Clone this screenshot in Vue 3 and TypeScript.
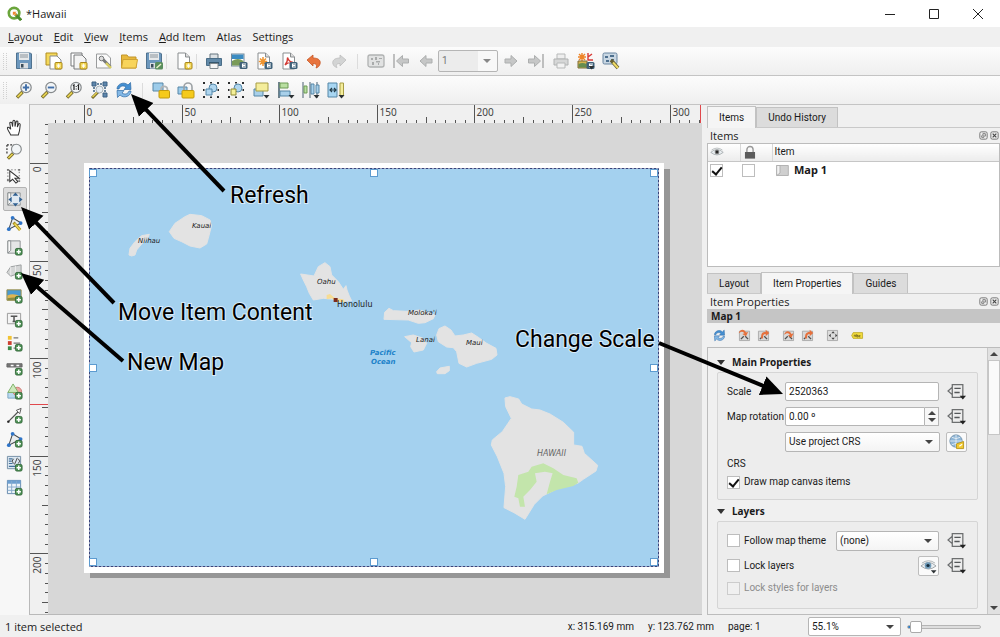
<script setup lang="ts">
import { ref } from 'vue'

interface ToolButton {
  icon: string
  label: string
  disabled?: boolean
}

const plus = '<rect x="10" y="10" width="7" height="7" rx="1.5" fill="#4d9255" stroke="#35683b"/><path d="M13.5 11.2v4.6M11.2 13.5h4.6" stroke="#fff" stroke-width="1.5"/>'
const down = '<path d="M11.500 14h6l-3 3.500z" fill="#2c3134"/>'
const star = '<rect x="10" y="10.500" width="7" height="6.500" rx="1" fill="#f3d64a" stroke="#a8861c"/><path d="M13.500 11.500v4.500M11.500 13.800h4M12 12.300l3 3M15 12.300l-3 3" stroke="#fff" stroke-width=".8"/>'
const exporter = '<rect x="9.500" y="10" width="8" height="7" rx="1.500" fill="#3e6079"/><path d="M16 12h-3.500v3H16M12 13.500h3.500" fill="none" stroke="#fff" stroke-width="1.100"/>'
const lens = '<path d="M7.500 11 2 16.500" stroke="#6c6125" stroke-width="3.400"/><path d="M7 11.500 2.500 16" stroke="#e3cf51" stroke-width="1.800"/><circle cx="11" cy="6.500" r="5.200" fill="#f2f5f7" stroke="#85898b" stroke-width="1.200"/>'
const floppy = '<path d="M1.500 1h14l1 1v14.500h-15z" fill="#6c97bd" stroke="#50728f"/><rect x="4" y="1" width="10" height="7" fill="#e6e9eb"/><path d="M5 3h8M5 5h8" stroke="#8c959c"/><rect x="5" y="11" width="8" height="5.500" fill="#d9dee2"/><rect x="6" y="12" width="2.500" height="3.500" fill="#3b4d5b"/>'
const page = '<path d="M3 1h7.500l4 4v12H3z" fill="#fff" stroke="#898d8f"/><path d="M10.500 1v4h4" fill="#ddd" stroke="#898d8f"/>'
const padlock = '<path d="M9 10V8.500a3.200 3.200 0 0 1 6.400 0V10" fill="none" stroke="#b0b4b6" stroke-width="1.800"/><rect x="7" y="9.500" width="10.500" height="7.500" rx="1" fill="#f5ca1b" stroke="#c09a11"/>'
const dots = (c: string) => `<path d="M1 1h2v2H1zM15 1h2v2h-2zM1 15h2v2H1zM15 15h2v2h-2zM8 1h2v1.500H8zM8 15.500h2V17H8zM1 8h1.500v2H1zM15.500 8H17v2h-1.500z" fill="${c}"/>`
const mapSheet = '<path d="M2 2h13v13H2z" fill="#e5e6e6" stroke="#8b8f92"/><path d="M2 2h3v10l-3 3z" fill="#fafafa" stroke="#8b8f92"/>'
const arrows4 = (c: string) => `<path d="M10 1.500 13 5H7zM10 16.500 7 13h6zM2.500 9 6 6v6zM17.500 9 14 12V6z" fill="${c}"/>`
const nodes = '<path d="M3 15 7 3l9 5.500z" fill="#e9ecee" stroke="#46494b" stroke-width="1.100"/><circle cx="7" cy="3" r="2" fill="#2e74c8"/><circle cx="3" cy="15" r="2" fill="#2e74c8"/><circle cx="15.500" cy="8.500" r="2" fill="#2e74c8"/>'
const sync = '<path d="M2 8C2 3 9 0 13 4l2.500-2.500L16 8.500H9L11 6C8 4 5 5 4 8z" fill="#4590d2" stroke="#2e6aa5" stroke-width=".7"/><path d="M16 10c0 5-7 8-11 4l-2.500 2.500L2 9.500h7L7 12c3 2 6 1 7-2z" fill="#83b8e6" stroke="#2e6aa5" stroke-width=".7"/>'
const orangeIn = '<path d="M1 6C2 0 9-1 11 5l3-1-3 6-5-3 3-1C7 3 4 3 1 6z" fill="#e5703c"/>'
const orangeOut = '<path d="M6 13C5 7 7 4 12 4V1l5 4.500-5 4.500V7C9 7 8 9 8.500 13z" fill="#e5703c"/>'
const frameGrey = '<path d="M2 3h14v13H2z" fill="#d8d8d8" stroke="#9a9a9a"/><path d="M4 14l4-4M14 14l-4-4" stroke="#505050" stroke-width="1.800"/>'
const left = '<path d="M3 9l6-5.500v3.500h6v4H9v3.500z" fill="#c6c7c7" stroke="#adafaf"/>'
const right = '<path d="M15 9 9 3.500V7H3v4h6v3.500z" fill="#c6c7c7" stroke="#adafaf"/>'
const eye = '<path d="M1 9.500Q9 2 17 9.500Q9 16 1 9.500z" fill="#e9eef1" stroke="#9da3a6"/><path d="M2 6.500Q9 1.500 16 6.500" fill="none" stroke="#aab0b3"/>'

const icons: Record<string, string> = {
  save: floppy,
  newLayout: '<path d="M1 1h11v12H1z" fill="#f4d85b" stroke="#b08d20"/><path d="M5 4h7l4 4v9H5z" fill="#fff" stroke="#898d8f"/>' + star,
  duplicate: '<path d="M1 1h11v13H1z" fill="#fff" stroke="#77797a"/><path d="M4 3h8l4 4v10H4z" fill="#f3f3f3" stroke="#77797a"/>' + star,
  manager: '<path d="M1.500 2h10l4 4v10h-14z" fill="#fafafa" stroke="#9a9c9d"/><path d="M7 6.500 15.500 15" stroke="#77797a" stroke-width="3"/><path d="M11 11l5 5" stroke="#d9cf63" stroke-width="2.400"/><circle cx="6.500" cy="6.500" r="2.300" fill="#ddd" stroke="#77797a"/>',
  folder: '<path d="M1.500 3h5.500l1.500 2H16v11H1.500z" fill="#e8b93c" stroke="#c1952a"/><path d="M1.500 16 3 7.500h14.500L16 16z" fill="#f8d45b" stroke="#cfa233"/>',
  saveTemplate: floppy + '<rect x="10" y="10" width="8" height="7.500" rx="1.500" fill="#5a8e5d"/><path d="M11.500 16l4.500-4" stroke="#e9f0c9" stroke-width="1.500"/>',
  addPage: page + star,
  print: '<path d="M5 2h8v5H5z" fill="#dce1e4" stroke="#64747f"/><path d="M1.500 6.500h15v7h-15z" fill="#6189a8" stroke="#4a6d87"/><path d="M4 10h10v2H4z" fill="#34566d"/><path d="M5 11.500h8v5H5z" fill="#f5f5f5" stroke="#7d878d"/>',
  exportImage: '<rect x="1.500" y="2" width="12.500" height="12" fill="#fff" stroke="#74899a"/><path d="M2 2.500h11.500V7H2z" fill="#3b8bc1"/><path d="M2 9q6-4 11.500 0v4.500H2z" fill="#7a9b59"/>' + exporter,
  exportSvg: page + '<path d="M8 5v9M3.800 9.500h8.400M5 6.500l6 6M11 6.500l-6 6" stroke="#ef9430" stroke-width="1.500"/>' + exporter,
  exportPdf: page + '<path d="M5 13Q8 9 7.500 5.500Q9 10 13 10.500Q8 10 5 13z" fill="none" stroke="#d33b35" stroke-width="1.300"/>' + exporter,
  undo: '<path d="M2 8 8 3v3c6 0 8 3 7 6-.5 2-2 3.500-4 4 1.500-3 0-4.500-3-4.500V14z" fill="#e8743e" stroke="#c65724" stroke-width=".8"/>',
  redo: '<path d="M16 8 10 3v3C4 6 2 9 3 12c.5 2 2 3 4 3.500-1.500-3 0-4 3-4V14z" fill="#d3d4d4" stroke="#bcbdbd" stroke-width=".8"/>',
  atlas: '<rect x="1" y="3" width="16" height="12" rx="2" fill="#e1e2e2" stroke="#b0b2b2" stroke-width="1.300"/><path d="M4 6h2v2H4zM8 5h2v3H8zM12 6h3v1h-3zM5 10h2v3H5zM9 9h4v1.500H9zM11 11h1v2h-1z" fill="#a9abab"/>',
  first: '<path d="M2 2v14" stroke="#b8b9b9" stroke-width="1.800"/><g transform="translate(1.500 0)">' + left + '</g>',
  prev: left,
  next: right,
  last: '<path d="M16 2v14" stroke="#b8b9b9" stroke-width="1.800"/><g transform="translate(-1.500 0)">' + right + '</g>',
  printGrey: '<path d="M5 2h8v5H5z" fill="#eee" stroke="#b7b9b9"/><path d="M2 7h14v6H2z" fill="#d6d7d7" stroke="#b0b2b2"/><path d="M5 11h8v5H5z" fill="#f2f2f2" stroke="#b7b9b9"/>',
  exportAtlas: '<path d="M5 1v8M1 5h8M2 2l6 6M8 2 2 8" stroke="#ee8528" stroke-width="1.400"/><path d="M11 1v7h5M11 5l4-3" fill="none" stroke="#d83a35" stroke-width="1.400"/><path d="M1 9h9v7H1z" fill="#d8b44f" stroke="#806c39"/><path d="M1.500 12q4-2 8 0v3.500h-8z" fill="#668d50"/>' + exporter + down,
  atlasSettings: '<rect x="1" y="1" width="14" height="11" rx="1.500" fill="#c9d7e3" stroke="#6985a0"/><path d="M3 4h3v2H3zM8 3h4v2H8zM4 8h3v2H4zM9 7h3v1H9z" fill="#4d6f8e"/><path d="M9 8l7 8" stroke="#665f31" stroke-width="3.500"/><path d="M11 10.500l5 5.500" stroke="#f1dc67" stroke-width="2"/>',
  zoomIn: lens + '<path d="M11 3.300v6.400M7.800 6.500h6.400" stroke="#416fa8" stroke-width="1.900"/>',
  zoomOut: lens + '<path d="M7.800 6.500h6.400" stroke="#416fa8" stroke-width="1.900"/>',
  zoomOne: lens + '<path d="M8 4.800 9 4v5M12.500 4.800l1-.8v5" fill="none" stroke="#222" stroke-width="1.200"/><path d="M10.700 5h1v1h-1zM10.700 7.500h1v1h-1z" fill="#222"/>',
  zoomFull: '<path d="M2 1h4v4H2zM13 1h4v4h-4zM13 12h4v4h-4z" fill="#5d86ad" stroke="#3d6182"/><path d="M7 3h5M15 6v5M4 6v5" stroke="#3d6182" stroke-width="1.500" stroke-dasharray="2 1"/><path d="M8 11 2 17" stroke="#756a2b" stroke-width="3"/><path d="M7 11.500 2.500 16" stroke="#e3cf51" stroke-width="1.500"/><circle cx="9.500" cy="8.500" r="3.500" fill="#e7edf2" stroke="#a7b1b8"/>',
  refresh: sync,
  lock: '<path d="M1 2h10v8H1z" fill="#9dccea" stroke="#5686a7"/>' + padlock,
  unlock: '<path d="M1 6h9v7H1z" fill="#9dccea" stroke="#5686a7"/><path d="M7 9V6a4 4 0 0 1 8 0v4" fill="none" stroke="#9da2a5" stroke-width="1.600"/><rect x="5" y="9.500" width="12" height="7.500" rx="1" fill="#f5ca1b" stroke="#c09a11"/>',
  group: dots('#2b2d2e') + '<circle cx="11" cy="7" r="4" fill="#b0d6ef" stroke="#5488aa"/><path d="M4 8h6v6H4z" fill="#b0d6ef" stroke="#5488aa"/>',
  ungroup: dots('#2b2d2e') + '<circle cx="11" cy="7" r="4" fill="#b0d6ef" stroke="#5488aa"/><path d="M4 8h5v6H4z" fill="#f3ef98" stroke="#8f8a34"/>',
  raise: '<path d="M2 8h9v7H2z" fill="#a8d0ea" stroke="#5486a6"/><path d="M4 2h12v8H4z" fill="#f4ed9b" stroke="#a79d44"/>' + down,
  align: '<path d="M2 1v16" stroke="#36505f" stroke-width="1.400"/><path d="M3 2h8v5H3z" fill="#b9dfa1" stroke="#6d9b54"/><path d="M3 10h10v5H3z" fill="#a8d0ea" stroke="#5486a6"/>' + down,
  distribute: '<path d="M1 1v16M8 1v16M15 1v16" stroke="#4a6170" stroke-width="1"/><path d="M2 5h3v7H2z" fill="#b9dfa1" stroke="#6d9b54"/><path d="M9 3h3v10H9zM14 4h3v8h-3z" fill="#a8d0ea" stroke="#5486a6"/>' + down,
  resize: '<path d="M1 2h9v14H1z" fill="#a8d6f2" stroke="#5486a6"/><path d="M3 9h6M5 7 3 9l2 2M7 7l2 2-2 2" fill="none" stroke="#263e4c" stroke-width="1.200"/><path d="M13 2h3.500v13H13z" fill="#f4ed9b" stroke="#a79d44"/>' + down,
  pan: '<path d="M5 17C4 14 1 11 1.500 9.500S4 9 5 11L4 4.500C4 3 6 3 6.300 4.500L7 8 7.300 2.500C7.500 1 9.300 1 9.500 2.500V8l1.200-5c.4-1.300 2-.9 1.900.5L12 8.500l1.300-3c.6-1.200 2-.6 1.700.8C14.500 10 15 12 13 17z" fill="#fff" stroke="#333" stroke-width="1.100"/>',
  zoomTool: '<path d="M1 2h8M1 2v9" stroke="#333" stroke-dasharray="2 1.500" fill="none" stroke-width="1.300"/>' + lens,
  select: '<path d="M2 3h12v11H2z" fill="none" stroke="#777" stroke-dasharray="1.500 2"/>' + '<path d="M4 4v11.500l3-2.500 3.500 4 2-1.500L9.500 12H14z" fill="#fff" stroke="#333" stroke-width="1.100"/><path d="M1 2h2v2H1zM13 2h2v2h-2zM1 13h2v2H1zM13 14h2v2h-2z" fill="#777"/>',
  moveContent: mapSheet + '<circle cx="10" cy="9" r="6" fill="#dfe9f2"/>' + arrows4('#305f90'),
  editNodes: nodes + '<path d="M8 8l7 8" stroke="#a98f1d" stroke-width="3.200"/><path d="M9 9l6 7" stroke="#f2db58" stroke-width="1.500"/>',
  addMap: mapSheet + plus,
  add3d: '<path d="M1 10 5 4l11-2v8L5 14z" fill="#d4d6d6" stroke="#999c9d"/><path d="M5 4v9M10 3v9" stroke="#eee"/>' + plus,
  addPicture: '<path d="M1 3h15v11H1z" fill="#4a9ad1" stroke="#9a8b43"/><path d="M1.500 9q6-3 14 1v3.500h-14z" fill="#e0b650"/><path d="M1.500 12q7-2 14 0v2h-14z" fill="#8b8b42"/>' + plus,
  addLabel: '<path d="M1.500 2.500h14v11h-14z" fill="#f4f4f4" stroke="#999"/><path d="M5 5.500h7M8.500 5.500V11M7 11h3" stroke="#555" stroke-width="1.600"/>' + plus,
  addLegend: '<path d="M2 1h4v4H2z" fill="#f2c333"/><path d="M2 6.500h4v4H2z" fill="#cc4030"/><path d="M2 12h4v4H2z" fill="#3b8a48"/><path d="M8 3h5M8 8.500h7M8 14h3" stroke="#777" stroke-width="1.300"/>' + plus,
  addScale: '<path d="M1 5h16v3.500H1z" fill="#777" stroke="#666"/><path d="M5 6.800h3M11 6.800h3" stroke="#fff" stroke-width="1.500"/>' + plus,
  addShape: '<path d="M2 10h8v6H2z" fill="#b9daf0" stroke="#7ba6c4"/><circle cx="12" cy="9" r="4.500" fill="#eaa7a2" stroke="#cb7770"/><path d="M2 10 7.500 1 13 10z" fill="#cde9bd" stroke="#7caf66"/>' + plus,
  addArrow: '<path d="M2 16 14 4" stroke="#555" stroke-width="1.300"/><path d="M16 1.500 14.500 7 11 3.500z" fill="#fff" stroke="#555"/><circle cx="2.500" cy="15.500" r="1.300" fill="#222"/>' + plus,
  addNode: nodes + plus,
  addHtml: '<path d="M1.500 1.500h14v13h-14z" fill="#dce8f2" stroke="#748ea5"/><path d="M3 4h4M3 6.500h3M3 9h4M3 12h7" stroke="#45729a" stroke-width="1.300"/><path d="M8 4 6.500 6.500 8 9M13 4l1.500 2.500L13 9M12 3l-3 7" stroke="#444" fill="none"/>' + plus,
  addTable: '<path d="M1.500 1.500h14v14h-14z" fill="#eef4fa" stroke="#6387ab"/><path d="M1.500 1.500h14V5h-14z" fill="#6d9fd0"/><path d="M1.500 8.500h14M1.500 12h14M6 2v13M11 2v13" stroke="#86a9cb"/>' + plus,
  viewToMap: frameGrey + orangeIn,
  mapToView: frameGrey + orangeOut,
  setCanvas: frameGrey + '<g transform="translate(2 2)">' + orangeIn + '</g>',
  viewExtent: frameGrey + orangeOut,
  bookmarks: '<path d="M2 2h14v14H2z" fill="#dcdcdc" stroke="#999"/><g transform="translate(1.800 1.800) scale(.8)">' + arrows4('#444') + '</g>',
  labeling: '<path d="M3 5h13v8H3L1 9z" fill="#f1db3d" stroke="#b7a01c"/><path d="M4.500 10.500v-2h2v2.500M8 7v4h2V9H8M13 9h-1.500v2H13" fill="none" stroke="#66591b"/>',
  eyeDark: eye + '<circle cx="9" cy="9" r="3" fill="#777"/><circle cx="9" cy="9" r="1.500" fill="#222"/>',
  eyeBlue: eye + '<circle cx="8.500" cy="9" r="3.500" fill="#6f9ab8"/><circle cx="8.500" cy="9" r="1.700" fill="#152c3c"/>' + down,
  padlockGrey: '<path d="M5 9V6a4 4 0 0 1 8 0v3" fill="none" stroke="#999" stroke-width="1.800"/><path d="M2.500 9h13v8.500h-13z" fill="#5c5c5c"/>',
  mapItem: '<path d="M2 3h14v12H2z" fill="#cfcfcf" stroke="#aaa"/><path d="M2 3h4v9l-4 3z" fill="#f2f2f2" stroke="#aaa"/>',
  override: '<path d="M5 2.500h10v12H5zM5 5 1 8.500 5 12z" fill="#ededed" stroke="#6d6f70" stroke-width="1.200"/><path d="M7 6h6M7 10h5" stroke="#55585a" stroke-width="1.300"/><path d="M12 13h6l-3 3.500z" fill="#222"/>',
  globe: '<circle cx="8.500" cy="8.500" r="6.500" fill="#8eb5d6" stroke="#6d8fab"/><path d="M2 8.500h13M8.500 2v13M4 4.500q4.500 3 9 0M4 12.500q4.500-3 9 0" fill="none" stroke="#e7f0f6" stroke-width=".9"/><path d="M9 11.500 16.500 9v7.500H9z" fill="#f1c92f" stroke="#ba9820"/><path d="M12 14l3-2" stroke="#fff" stroke-width="1.200"/>',
  float: '<rect x="3" y="3" width="12" height="12" rx="2.500" fill="#eee" stroke="#777" stroke-width="1.600"/><path d="M8 6h4v4H8zM6 9v3h4" fill="none" stroke="#666" stroke-width="1.300"/>',
  close: '<rect x="3" y="3" width="12" height="12" rx="2.500" fill="#eee" stroke="#777" stroke-width="1.600"/><path d="M6 6l6 6M12 6l-6 6" stroke="#444" stroke-width="1.800"/>',
  logo: '<circle cx="8.500" cy="8.500" r="6.300" fill="#fff" stroke="#6aa53b" stroke-width="3.200"/><path d="M10 10l7 7" stroke="#4e8a2b" stroke-width="3.600"/><path d="M7 7h4.500l-1.500 1.500 2 2-1.500 1.500-2-2L7 11.500z" fill="#ee8b32"/>',
}

const menus: { key: string; rest: string }[] = [
  { key: 'L', rest: 'ayout' },
  { key: 'E', rest: 'dit' },
  { key: 'V', rest: 'iew' },
  { key: 'I', rest: 'tems' },
  { key: 'A', rest: 'dd Item' },
  { key: '', rest: 'Atlas' },
  { key: '', rest: 'Settings' },
]

const fileGroups: ToolButton[][] = [
  [{ icon: 'save', label: 'Save project' }],
  [
    { icon: 'newLayout', label: 'New layout' },
    { icon: 'duplicate', label: 'Duplicate layout' },
    { icon: 'manager', label: 'Layout manager' },
    { icon: 'folder', label: 'Add items from template' },
    { icon: 'saveTemplate', label: 'Save as template' },
  ],
  [{ icon: 'addPage', label: 'Add pages' }],
  [
    { icon: 'print', label: 'Print layout' },
    { icon: 'exportImage', label: 'Export as image' },
    { icon: 'exportSvg', label: 'Export as SVG' },
    { icon: 'exportPdf', label: 'Export as PDF' },
    { icon: 'undo', label: 'Undo' },
    { icon: 'redo', label: 'Redo', disabled: true },
  ],
]
const atlasBefore: ToolButton[] = [
  { icon: 'atlas', label: 'Preview atlas', disabled: true },
  { icon: 'first', label: 'First feature', disabled: true },
  { icon: 'prev', label: 'Previous feature', disabled: true },
]
const atlasAfter: ToolButton[] = [
  { icon: 'next', label: 'Next feature', disabled: true },
  { icon: 'last', label: 'Last feature', disabled: true },
  { icon: 'printGrey', label: 'Print atlas', disabled: true },
  { icon: 'exportAtlas', label: 'Export atlas' },
  { icon: 'atlasSettings', label: 'Atlas settings' },
]
const viewTools: ToolButton[] = [
  { icon: 'zoomIn', label: 'Zoom in' },
  { icon: 'zoomOut', label: 'Zoom out' },
  { icon: 'zoomOne', label: 'Zoom to 100%' },
  { icon: 'zoomFull', label: 'Zoom full' },
  { icon: 'refresh', label: 'Refresh view' },
]
const arrangeTools: ToolButton[] = [
  { icon: 'lock', label: 'Lock selected items' },
  { icon: 'unlock', label: 'Unlock all items' },
  { icon: 'group', label: 'Group items' },
  { icon: 'ungroup', label: 'Ungroup items' },
  { icon: 'raise', label: 'Raise selected items' },
  { icon: 'align', label: 'Align selected items' },
  { icon: 'distribute', label: 'Distribute items' },
  { icon: 'resize', label: 'Resize items' },
]
const toolbox: ToolButton[] = [
  { icon: 'pan', label: 'Pan layout' },
  { icon: 'zoomTool', label: 'Zoom' },
  { icon: 'select', label: 'Select or move item' },
  { icon: 'moveContent', label: 'Move item content' },
  { icon: 'editNodes', label: 'Edit nodes item' },
  { icon: 'addMap', label: 'Add map' },
  { icon: 'add3d', label: 'Add 3D map' },
  { icon: 'addPicture', label: 'Add picture' },
  { icon: 'addLabel', label: 'Add label' },
  { icon: 'addLegend', label: 'Add legend' },
  { icon: 'addScale', label: 'Add scale bar' },
  { icon: 'addShape', label: 'Add shape' },
  { icon: 'addArrow', label: 'Add arrow' },
  { icon: 'addNode', label: 'Add node item' },
  { icon: 'addHtml', label: 'Add HTML' },
  { icon: 'addTable', label: 'Add attribute table' },
]
const mapTools: ToolButton[][] = [
  [{ icon: 'refresh', label: 'Update map preview' }],
  [
    { icon: 'viewToMap', label: 'Set map extent to canvas' },
    { icon: 'mapToView', label: 'View extent in canvas' },
  ],
  [
    { icon: 'setCanvas', label: 'Set map scale to canvas' },
    { icon: 'viewExtent', label: 'Set canvas to map scale' },
  ],
  [{ icon: 'bookmarks', label: 'Move content interactively' }],
  [{ icon: 'labeling', label: 'Labeling settings' }],
]

const activeTool = ref('moveContent')
const scale = ref('2520363')
const rotation = ref('0.00 º')
const drawCanvas = ref(true)
const followTheme = ref(false)
const lockLayers = ref(false)
const zoomLevel = ref(4)

/* Rulers: one tick every 5 mm, about 39 px for each 20 mm. */
const mm = 1.952
const originX = 84
const originY = 163
interface Tick { value: number; pos: number; size: number }
function ticks(origin: number, from: number, to: number): Tick[] {
  const list: Tick[] = []
  for (let value = from; value <= to; value += 5) {
    const size = value % 50 === 0 ? 18 : value % 25 === 0 ? 6 : 3
    list.push({ value, pos: Math.round(origin + value * mm) + 0.5, size })
  }
  return list
}
const xTicks = ticks(originX, -15, 315)
const yTicks = ticks(originY, -20, 230)

const handles = [
  [89, 169], [370, 169], [650, 169],
  [89, 364], [650, 364],
  [89, 558], [370, 558], [650, 558],
]

interface Callout { text: string; x: number; y: number; from: [number, number]; tip: [number, number] }
const callouts: Callout[] = [
  { text: 'Refresh', x: 230, y: 203, from: [224, 191], tip: [131, 94] },
  { text: 'Move Item Content', x: 118, y: 320, from: [114, 303], tip: [21, 207] },
  { text: 'New Map', x: 127, y: 370, from: [123, 361], tip: [21, 273] },
  { text: 'Change Scale', x: 515, y: 347, from: [659, 343], tip: [783, 394] },
]
function shaft(c: Callout) {
  const dx = c.tip[0] - c.from[0]
  const dy = c.tip[1] - c.from[1]
  const k = 1 - 20 / Math.hypot(dx, dy)
  return { x1: c.from[0], y1: c.from[1], x2: c.from[0] + dx * k, y2: c.from[1] + dy * k }
}
</script>

<template>
  <div class="window">
    <header class="titlebar">
      <svg class="logo" viewBox="0 0 18 18" v-html="icons.logo"></svg>
      <h1>*Hawaii</h1>
      <div class="window-buttons">
        <button aria-label="Minimize"><svg viewBox="0 0 12 12"><path d="M1 6.500h10" /></svg></button>
        <button aria-label="Maximize"><svg viewBox="0 0 12 12"><path d="M1.500 1.500h9v9h-9z" /></svg></button>
        <button aria-label="Close"><svg viewBox="0 0 12 12"><path d="M1 1l10 10M11 1 1 11" /></svg></button>
      </div>
    </header>

    <nav class="menubar">
      <button v-for="m in menus" :key="m.rest"><u>{{ m.key }}</u>{{ m.rest }}</button>
    </nav>

    <div class="toolbar">
      <span class="grip"></span>
      <template v-for="(group, i) in fileGroups" :key="i">
        <span v-if="i" class="sep"></span>
        <button v-for="t in group" :key="t.icon" class="tool" :aria-label="t.label" :disabled="t.disabled">
          <svg viewBox="0 0 18 18" v-html="icons[t.icon]"></svg>
        </button>
      </template>
      <span class="sep wide"></span>
      <button v-for="t in atlasBefore" :key="t.icon" class="tool" :aria-label="t.label" :disabled="t.disabled">
        <svg viewBox="0 0 18 18" v-html="icons[t.icon]"></svg>
      </button>
      <span class="select atlas-page">
        <select aria-label="Atlas page" disabled><option>1</option></select>
      </span>
      <button v-for="t in atlasAfter" :key="t.icon" class="tool" :aria-label="t.label" :disabled="t.disabled">
        <svg viewBox="0 0 18 18" v-html="icons[t.icon]"></svg>
      </button>
    </div>

    <div class="toolbar">
      <span class="grip"></span>
      <button v-for="t in viewTools" :key="t.icon" class="tool" :aria-label="t.label">
        <svg viewBox="0 0 18 18" v-html="icons[t.icon]"></svg>
      </button>
      <span class="sep wide"></span>
      <button v-for="t in arrangeTools" :key="t.icon" class="tool" :aria-label="t.label">
        <svg viewBox="0 0 18 18" v-html="icons[t.icon]"></svg>
      </button>
    </div>

    <main class="workspace">
      <aside class="toolbox">
        <button
          v-for="t in toolbox" :key="t.icon" :class="{ active: t.icon === activeTool }"
          :aria-label="t.label" @click="activeTool = t.icon"
        >
          <svg viewBox="0 0 18 18" v-html="icons[t.icon]"></svg>
        </button>
      </aside>

      <section class="canvas">
        <svg width="100%" height="100%">
          <g transform="translate(-30 -104)">
            <rect x="48" y="123" width="3000" height="3000" fill="#d7d7d7" />
            <g class="ruler">
              <template v-for="t in xTicks" :key="t.value">
                <path :d="`M${t.pos} 123v-${t.size}`" />
                <text v-if="t.size === 18" :x="t.pos + 2" y="116">{{ t.value }}</text>
              </template>
              <template v-for="t in yTicks" :key="t.value">
                <path :d="`M48 ${t.pos}h-${t.size}`" />
                <text
                  v-if="t.size === 18" text-anchor="end"
                  :transform="`translate(41 ${t.pos + 3}) rotate(-90)`"
                >{{ t.value }}</text>
              </template>
              <path class="cursor" d="M30 404.500h18M700.500 105v18" />
            </g>

            <rect x="90" y="169" width="580" height="409" fill="#969696" />
            <rect x="84" y="163" width="580" height="410" fill="#fff" />
            <rect x="89" y="169" width="570" height="397" fill="#a4d1ef" />

            <g class="land" transform="translate(110 170) scale(.3333)">
              <path d="M57 255 60 235 75 215 95 197 118 193 112 207 95 222 80 240 75 255 65 258z" />
              <path d="M178 185 195 160 225 140 240 133 275 137 300 150 305 165 295 205 290 222 270 234 240 228 215 215 192 205z" />
              <path d="M572 312 612 318 625 290 645 278 660 290 665 315 685 335 700 358 708 347 711 360 718 378 725 392 690 395 672 388 640 385 610 390 598 370 590 350 580 330z" />
              <path class="urban" d="M650 375 660 372 675 385 700 388 705 397 680 395 665 385 650 388z" />
              <rect x="671" y="384" width="12" height="12" fill="#7c2b1b" />
            </g>
            <g class="land" transform="translate(370 280) scale(.3333)">
              <path d="M42 118 44 97 57 85 70 92 110 94 150 90 195 105 190 116 165 128 145 130 115 120z" />
              <path d="M104 170 130 165 160 175 170 190 160 210 132 216 122 200 125 188z" />
              <path d="M200 165 207 146 225 138 243 150 255 168 280 165 305 159 325 172 350 190 378 205 381 225 365 238 320 250 290 261 267 250 260 215 250 203 230 201 205 185z" />
              <path d="M200 275 210 264 238 259 238 272 225 281 202 281z" />
              <path d="M405 354 420 350 446 357 455 372 485 387 510 390 540 402 580 427 611 457 611 495 636 499 643 520 683 556 678 573 640 598 623 610 568 623 518 648 493 673 465 718 432 698 402 683 407 620 402 580 382 530 364 495 367 480 397 455 414 430 424 415 407 380z" />
              <path class="park" d="M445 585 475 575 485 560 520 550 550 565 580 585 620 595 625 608 610 618 560 630 530 643 540 605 548 580 525 575 495 580 500 605 480 630 460 650 465 680 450 680 445 655 433 650 440 620z" />
            </g>
            <g class="place">
              <text x="138" y="243">Niihau</text>
              <text x="192" y="228">Kauai</text>
              <text x="317" y="284">Oahu</text>
              <text x="408" y="315">Moloka'i</text>
              <text x="416" y="342">Lanai</text>
              <text x="466" y="345">Maui</text>
              <text class="city" x="337" y="307">Honolulu</text>
              <text class="sea" x="370" y="355">Pacific</text>
              <text class="sea" x="371" y="364">Ocean</text>
              <text class="big" x="537" y="456">HAWAII</text>
            </g>

            <rect x="89.500" y="168.500" width="569" height="398" fill="none" stroke="#fff" />
            <rect x="89.500" y="168.500" width="569" height="398" fill="none" stroke="#37447c" stroke-dasharray="3 1" />
            <rect
              v-for="h in handles" :key="h.join()" :x="h[0] + 0.5" :y="h[1] + 0.5"
              width="7" height="7" fill="#fff" stroke="#5c9bd0"
            />
          </g>
        </svg>
      </section>

      <aside class="dock">
        <div class="tabs">
          <button class="current">Items</button>
          <button>Undo History</button>
        </div>
        <section class="items">
          <header class="dock-title">
            <h2>Items</h2>
            <button aria-label="Float"><svg viewBox="0 0 18 18" v-html="icons.float"></svg></button>
            <button aria-label="Close"><svg viewBox="0 0 18 18" v-html="icons.close"></svg></button>
          </header>
          <div class="item-list">
            <table>
              <thead>
                <tr>
                  <th class="flag"><svg viewBox="0 0 18 18" v-html="icons.eyeDark"></svg></th>
                  <th class="flag"><svg viewBox="0 0 18 18" v-html="icons.padlockGrey"></svg></th>
                  <th class="name">Item</th>
                </tr>
              </thead>
              <tbody>
                <tr>
                  <td class="flag"><input type="checkbox" aria-label="Visible" checked /></td>
                  <td class="flag"><input type="checkbox" aria-label="Locked" /></td>
                  <td class="name"><span><svg viewBox="0 0 18 18" v-html="icons.mapItem"></svg>Map 1</span></td>
                </tr>
              </tbody>
            </table>
          </div>
        </section>

        <div class="tabs lower">
          <button>Layout</button>
          <button class="current">Item Properties</button>
          <button>Guides</button>
        </div>
        <section class="properties">
          <header class="dock-title">
            <h2>Item Properties</h2>
            <button aria-label="Float"><svg viewBox="0 0 18 18" v-html="icons.float"></svg></button>
            <button aria-label="Close"><svg viewBox="0 0 18 18" v-html="icons.close"></svg></button>
          </header>
          <h3 class="item-name">Map 1</h3>
          <div class="map-tools">
            <span v-for="(group, i) in mapTools" :key="i">
              <button v-for="t in group" :key="t.icon" :aria-label="t.label">
                <svg viewBox="0 0 18 18" v-html="icons[t.icon]"></svg>
              </button>
            </span>
          </div>
          <div class="scroll-area">
            <div class="form">
              <h4>Main Properties</h4>
              <div class="box main-box">
                <div class="row">
                  <label class="caption" for="scale">Scale</label>
                  <input id="scale" v-model="scale" type="text" />
                  <button class="plain" aria-label="Scale override"><svg viewBox="0 0 18 18" v-html="icons.override"></svg></button>
                </div>
                <div class="row">
                  <label class="caption" for="rotation">Map rotation</label>
                  <span class="spin">
                    <input id="rotation" v-model="rotation" type="text" />
                    <span class="steps">
                      <button class="up" aria-label="Increase"></button>
                      <button class="down" aria-label="Decrease"></button>
                    </span>
                  </span>
                  <button class="plain" aria-label="Rotation override"><svg viewBox="0 0 18 18" v-html="icons.override"></svg></button>
                </div>
                <div class="row">
                  <span class="caption"></span>
                  <span class="select"><select id="crs"><option>Use project CRS</option></select></span>
                  <button class="framed" aria-label="Select CRS"><svg viewBox="0 0 18 18" v-html="icons.globe"></svg></button>
                </div>
                <label class="crs" for="crs">CRS</label>
                <label class="check"><input v-model="drawCanvas" type="checkbox" />Draw map canvas items</label>
              </div>
              <h4>Layers</h4>
              <div class="box layers-box">
                <div class="row">
                  <label class="check"><input v-model="followTheme" type="checkbox" />Follow map theme</label>
                  <span class="select theme"><select aria-label="Map theme"><option>(none)</option></select></span>
                  <button class="plain" aria-label="Theme override"><svg viewBox="0 0 18 18" v-html="icons.override"></svg></button>
                </div>
                <div class="row">
                  <label class="check grow"><input v-model="lockLayers" type="checkbox" />Lock layers</label>
                  <button class="framed" aria-label="Set layers from theme"><svg viewBox="0 0 18 18" v-html="icons.eyeBlue"></svg></button>
                  <button class="plain" aria-label="Layers override"><svg viewBox="0 0 18 18" v-html="icons.override"></svg></button>
                </div>
                <label class="check off"><input type="checkbox" disabled />Lock styles for layers</label>
              </div>
            </div>
            <div class="scrollbar">
              <button class="up" aria-label="Scroll up"></button>
              <span class="thumb"></span>
              <button class="down" aria-label="Scroll down"></button>
            </div>
          </div>
        </section>
      </aside>
    </main>

    <footer class="statusbar">
      <span class="message">1 item selected</span>
      <span>x: 315.169 mm</span>
      <span>y: 123.762 mm</span>
      <span class="page-no">page: 1</span>
      <span class="select zoom"><select aria-label="Zoom level"><option>55.1%</option></select></span>
      <input v-model="zoomLevel" class="slider" type="range" min="0" max="100" aria-label="Zoom" />
    </footer>

    <svg class="callouts" width="1000" height="637" aria-hidden="true">
      <defs>
        <marker id="head" markerUnits="userSpaceOnUse" markerWidth="24" markerHeight="24" refX="2" refY="11" orient="auto">
          <path d="M0 1 22 11 0 21z" />
        </marker>
      </defs>
      <g v-for="c in callouts" :key="c.text">
        <line v-bind="shaft(c)" marker-end="url(#head)" />
        <text :x="c.x" :y="c.y">{{ c.text }}</text>
      </g>
    </svg>
  </div>
</template>

<style>
body {
  margin: 0;
  background: #f0f0f0;
}
</style>

<style scoped>
.window {
  position: relative;
  display: flex;
  flex-direction: column;
  min-height: 100vh;
  background: #f0f0f0;
  color: #1a1a1a;
  font: 10px/14px Roboto, "Noto Sans", sans-serif;
}
* { box-sizing: border-box; }
button, input, select { font: inherit; color: inherit; }
button { padding: 0; border: 0; background: none; }
h1, h2, h3, h4 { margin: 0; }

.titlebar {
  display: flex;
  align-items: center;
  height: 27px;
  padding-left: 7px;
  background: #fff;
}
.logo { width: 15px; height: 15px; }
.titlebar h1 {
  flex: 1;
  padding-left: 4px;
  font: 11px/18px "Open Sans", sans-serif;
}
.window-buttons { display: flex; }
.window-buttons button { width: 44px; height: 27px; }
.window-buttons svg { width: 12px; height: 12px; vertical-align: middle; }
.window-buttons path { fill: none; stroke: #222; stroke-width: 1; }

.menubar {
  display: flex;
  align-items: center;
  gap: 11px;
  height: 20px;
  padding-left: 8px;
  font: 11px/18px "Open Sans", sans-serif;
}

.toolbar {
  display: flex;
  align-items: center;
  height: 29px;
  border-bottom: 1px solid #c4c4c4;
  background: linear-gradient(#fcfcfc, #efefef);
}
.grip {
  width: 4px;
  height: 17px;
  margin: 0 4px 0 3px;
  border: dotted #d0d0d0;
  border-width: 0 1px;
}
.sep { width: 5px; height: 15px; border-left: 1px solid #dcdcdc; }
.sep.wide { width: 6px; margin-left: 6px; }
.tool { display: grid; place-items: center; width: 25px; height: 26px; }
.tool svg { width: 18px; height: 18px; }

.select { position: relative; display: block; }
.select select {
  width: 100%;
  height: 100%;
  padding: 0 3px;
  appearance: none;
  border: 1px solid #b5b5b5;
  border-radius: 2px;
  background: linear-gradient(#fff, #f4f4f4);
}
.select::after {
  content: "";
  position: absolute;
  top: 50%;
  right: 7px;
  margin-top: -2px;
  border: 4px solid transparent;
  border-top-color: #444;
  border-bottom: 0;
}
.atlas-page { width: 60px; height: 22px; }
.atlas-page select { background: linear-gradient(90deg, #ececec 68%, #f8f8f8 68%); color: #777; opacity: 1; }
.atlas-page::after { border-top-color: #888; }

.workspace { display: flex; flex: 1; margin-top: -1px; }
.toolbox {
  flex: none;
  display: flex;
  flex-direction: column;
  align-items: center;
  width: 30px;
  padding-top: 11px;
  background: #f7f7f7;
  border-right: 1px solid #b9b9b9;
}
.toolbox button { display: grid; place-items: center; width: 24px; height: 24px; }
.toolbox button.active { border: 1px solid #b3b3b3; border-radius: 2px; background: #dcdcdc; }
.toolbox svg { width: 17px; height: 17px; }

.canvas { flex: 1; position: relative; min-width: 0; border-bottom: 1px solid #b9b9b9; }
.canvas > svg { position: absolute; inset: 0; }
.ruler path { stroke: #555; stroke-width: 1; }
.ruler .cursor { stroke: #e0484c; }
.ruler text { fill: #444; font: 10px "Noto Sans", sans-serif; }
.land path { fill: #e3e3e3; stroke: #e3e3e3; stroke-width: 3; stroke-linejoin: round; }
.land .urban { fill: #f7dc93; stroke: none; }
.land .park { fill: #c3e5ab; stroke: none; }
.place text { fill: #222; font: italic 7px "DejaVu Sans", sans-serif; }
.place .city { font: 8px "DejaVu Sans", sans-serif; }
.place .sea { fill: #1c82c9; font-weight: bold; }
.place .big { fill: #666; font-size: 8px; }

.dock {
  flex: none;
  display: flex;
  flex-direction: column;
  width: 298px;
  padding: 2px 0 0 5px;
}
.tabs { display: flex; align-items: flex-end; height: 22px; border-bottom: 1px solid #c9c9c9; }
.tabs button {
  height: 20px;
  padding: 0 11px;
  border: 1px solid #c2c2c2;
  border-bottom: 0;
  background: #dcdcdc;
}
.tabs .current { height: 22px; margin-bottom: -1px; background: #f5f5f5; }
.dock-title { display: flex; align-items: center; height: 15px; padding-left: 3px; }
.dock-title h2 { flex: 1; font: 11px/15px "Open Sans", sans-serif; }
.dock-title button { width: 11px; height: 15px; }
.dock-title svg { display: block; width: 11px; height: 11px; }
.items { flex: none; }
.item-list { height: 124px; border: 1px solid #bcbcbc; background: #fff; }
table { width: 100%; border-collapse: collapse; }
th { height: 17px; padding: 0; border-bottom: 1px solid #c6c6c6; background: linear-gradient(#fff, #ececec); font-weight: 400; text-align: left; }
td { height: 18px; padding: 0; }
th.flag + th { border-left: 1px solid #d8d8d8; }
.flag { width: 32px; padding-left: 2px; }
.flag svg { display: block; width: 14px; height: 14px; }
.name { padding-left: 2px; }
td.name { font: 700 11px/14px "Noto Sans", sans-serif; }
.name span { display: flex; align-items: center; gap: 4px; padding-left: 1px; }
.name svg { width: 15px; height: 15px; }

input[type="checkbox"] {
  display: grid;
  place-items: center;
  flex: none;
  width: 13px;
  height: 13px;
  margin: 0;
  appearance: none;
  border: 1px solid #bdbdbd;
  background: #fff;
}
input[type="checkbox"]:checked::before {
  content: "";
  width: 4px;
  height: 8px;
  margin-bottom: 2px;
  border: solid #111;
  border-width: 0 2px 2px 0;
  transform: rotate(40deg);
}
input[type="checkbox"]:disabled { background: #f0f0f0; border-color: #ccc; }

.lower { margin-top: 5px; }
.properties { flex: 1; display: flex; flex-direction: column; }
.item-name { padding-left: 4px; background: #c5c5c5; font: 700 10px/14px "Noto Sans", sans-serif; }
.map-tools { display: flex; gap: 6px; height: 24px; align-items: center; padding-left: 3px; }
.map-tools span { display: flex; }
.map-tools button { display: grid; place-items: center; width: 19px; height: 20px; }
.map-tools svg { width: 13px; height: 13px; }
.scroll-area { display: flex; flex: 1; border: 1px solid #bcbcbc; border-right: 0; }
.form { flex: 1; padding: 5px 9px 0; }
.form h4 { display: flex; align-items: center; gap: 7px; height: 19px; font: 700 10px/19px "Noto Sans", sans-serif; }
.form h4::before { content: ""; border: 4px solid transparent; border-top: 5px solid #333; border-bottom: 0; }
.box { padding: 9px 10px 0 9px; border: 1px solid #d5d5d5; border-radius: 2px; background: #ededed; }
.main-box { height: 128px; margin-bottom: 2px; }
.layers-box { height: 88px; }
.row { display: flex; align-items: center; height: 19px; margin-bottom: 6px; }
.caption { flex: none; width: 58px; white-space: nowrap; }
.row input[type="text"] {
  flex: 1;
  min-width: 0;
  width: 100%;
  height: 19px;
  padding: 0 3px;
  border: 1px solid #b5b5b5;
  border-radius: 2px;
  background: #fff;
}
.row .select { flex: 1; height: 20px; }
.spin { display: flex; flex: 1; min-width: 0; }
.row .spin input { border-radius: 2px 0 0 2px; }
.steps { display: flex; flex-direction: column; justify-content: center; gap: 3px; width: 14px; border: 1px solid #b5b5b5; border-left: 0; background: #f7f7f7; }
.steps button { align-self: center; }
.up, .down { width: 0; height: 0; border: 4px solid transparent; }
.up { border-top: 0; border-bottom-color: #444; }
.down { border-bottom: 0; border-top-color: #444; }
.plain, .framed { flex: none; display: grid; place-items: center; width: 21px; height: 20px; }
.plain { margin-left: 7px; }
.plain svg { width: 19px; height: 19px; }
.framed { margin-left: 6px; border: 1px solid #bdbdbd; border-radius: 2px; background: #fafafa; }
.framed svg { width: 17px; height: 17px; }
.crs { display: block; height: 14px; margin-bottom: 4px; }
.check { display: flex; align-items: center; gap: 4px; white-space: nowrap; }
.grow { flex: 1; }
.off { color: #8c8c8c; margin-top: 6px; }
.layers-box .theme { flex: none; width: 103px; margin-left: auto; }
.scrollbar { display: flex; flex-direction: column; align-items: center; width: 13px; padding: 4px 0; background: #e1e1e1; box-shadow: inset 1px 0 #c8c8c8; }
.scrollbar .thumb { width: 12px; height: 75px; margin: 4px 0 auto; border: 1px solid #c6c6c6; background: #fafafa; }

.statusbar {
  display: flex;
  align-items: center;
  gap: 14px;
  height: 22px;
  padding: 1px 19px 0 5px;
}
.message { flex: 1; font: 11px/16px "Open Sans", sans-serif; }
.page-no { width: 66px; }
.zoom { width: 93px; height: 19px; }
.zoom select { background: #fff; }
.slider { width: 74px; height: 14px; margin: 0 0 0 -8px; appearance: none; background: none; }
.slider::-webkit-slider-runnable-track { height: 4px; border: 1px solid #b5b5b5; border-radius: 2px; background: linear-gradient(90deg, #2f7ec8 5px, #ddd 5px); }
.slider::-webkit-slider-thumb { appearance: none; width: 12px; height: 12px; margin-top: -5px; border: 1px solid #aaa; border-radius: 2px; background: #fff; }

.callouts { position: absolute; left: 0; top: 0; pointer-events: none; }
.callouts line { stroke: #000; stroke-width: 4; }
.callouts text { font: 23px Roboto, sans-serif; fill: #000; paint-order: stroke; stroke: #d9ecf9; stroke-width: 2px; }
</style>
